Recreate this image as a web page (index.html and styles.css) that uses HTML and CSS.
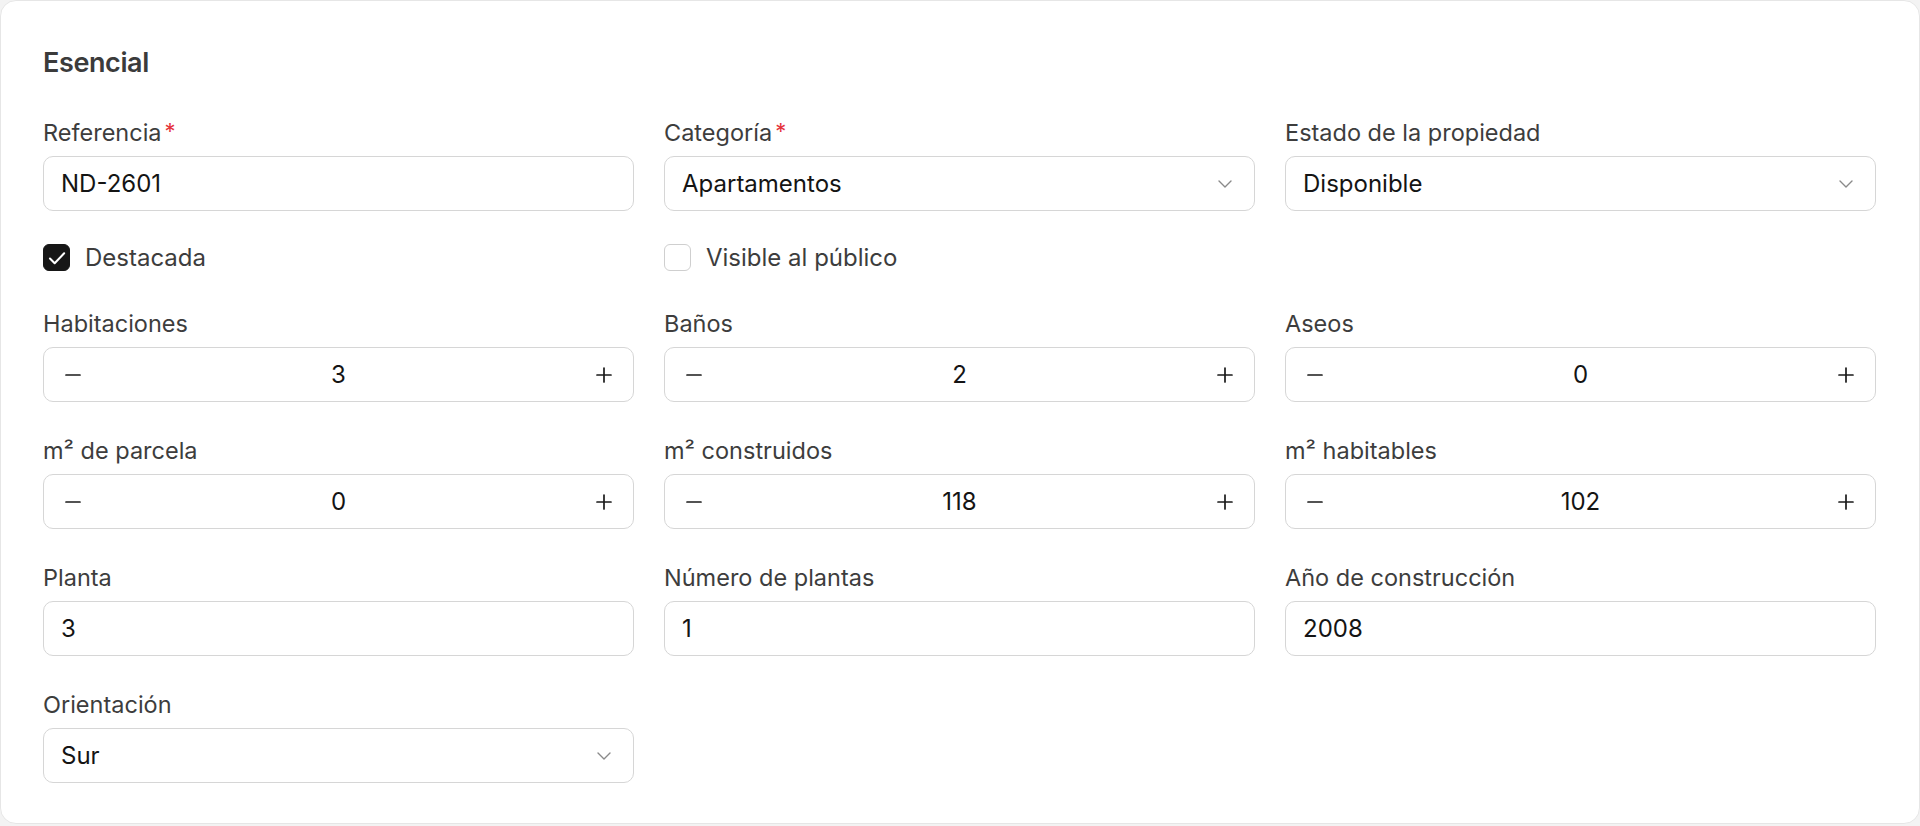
FILE: index.html
```html
<!DOCTYPE html>
<html lang="es">
<head>
<meta charset="utf-8">
<title>Esencial</title>
<link rel="stylesheet" href="styles.css">
</head>
<body>
<section class="card">
  <h2 class="title">Esencial</h2>
  <div class="grid">
    <div class="field">
      <label class="label">Referencia<span class="req">*</span></label>
      <div class="control"><span class="value">ND-2601</span></div>
    </div>
    <div class="field">
      <label class="label">Categoría<span class="req">*</span></label>
      <div class="control select"><span class="value">Apartamentos</span>
        <svg class="chev" viewBox="0 0 14 8" width="14" height="8"><path d="M1 1l6 6 6-6" fill="none" stroke="#8a8a8a" stroke-width="1.4" stroke-linecap="round" stroke-linejoin="round"/></svg>
      </div>
    </div>
    <div class="field">
      <label class="label">Estado de la propiedad</label>
      <div class="control select"><span class="value">Disponible</span>
        <svg class="chev" viewBox="0 0 14 8" width="14" height="8"><path d="M1 1l6 6 6-6" fill="none" stroke="#8a8a8a" stroke-width="1.4" stroke-linecap="round" stroke-linejoin="round"/></svg>
      </div>
    </div>

    <div class="check-row">
      <span class="box checked"><svg viewBox="0 0 16 16" width="22" height="22"><path d="M2.9 8.4l3.4 3.4 6.9-7.2" fill="none" stroke="#fff" stroke-width="1.5" stroke-linecap="round" stroke-linejoin="round"/></svg></span>
      <span class="check-label">Destacada</span>
    </div>
    <div class="check-row">
      <span class="box"></span>
      <span class="check-label">Visible al público</span>
    </div>
    <div></div>

    <div class="field">
      <label class="label">Habitaciones</label>
      <div class="control stepper">
        <svg class="ico" viewBox="0 0 16 16" width="16" height="16"><path d="M1 8h14" stroke="#1a1a1a" stroke-width="1.7" stroke-linecap="round"/></svg>
        <span class="num">3</span>
        <svg class="ico" viewBox="0 0 16 16" width="16" height="16"><path d="M1 8h14M8 1v14" stroke="#1a1a1a" stroke-width="1.7" stroke-linecap="round"/></svg>
      </div>
    </div>
    <div class="field">
      <label class="label">Baños</label>
      <div class="control stepper">
        <svg class="ico" viewBox="0 0 16 16" width="16" height="16"><path d="M1 8h14" stroke="#1a1a1a" stroke-width="1.7" stroke-linecap="round"/></svg>
        <span class="num">2</span>
        <svg class="ico" viewBox="0 0 16 16" width="16" height="16"><path d="M1 8h14M8 1v14" stroke="#1a1a1a" stroke-width="1.7" stroke-linecap="round"/></svg>
      </div>
    </div>
    <div class="field">
      <label class="label">Aseos</label>
      <div class="control stepper">
        <svg class="ico" viewBox="0 0 16 16" width="16" height="16"><path d="M1 8h14" stroke="#1a1a1a" stroke-width="1.7" stroke-linecap="round"/></svg>
        <span class="num">0</span>
        <svg class="ico" viewBox="0 0 16 16" width="16" height="16"><path d="M1 8h14M8 1v14" stroke="#1a1a1a" stroke-width="1.7" stroke-linecap="round"/></svg>
      </div>
    </div>

    <div class="field">
      <label class="label">m² de parcela</label>
      <div class="control stepper">
        <svg class="ico" viewBox="0 0 16 16" width="16" height="16"><path d="M1 8h14" stroke="#1a1a1a" stroke-width="1.7" stroke-linecap="round"/></svg>
        <span class="num">0</span>
        <svg class="ico" viewBox="0 0 16 16" width="16" height="16"><path d="M1 8h14M8 1v14" stroke="#1a1a1a" stroke-width="1.7" stroke-linecap="round"/></svg>
      </div>
    </div>
    <div class="field">
      <label class="label">m² construidos</label>
      <div class="control stepper">
        <svg class="ico" viewBox="0 0 16 16" width="16" height="16"><path d="M1 8h14" stroke="#1a1a1a" stroke-width="1.7" stroke-linecap="round"/></svg>
        <span class="num">118</span>
        <svg class="ico" viewBox="0 0 16 16" width="16" height="16"><path d="M1 8h14M8 1v14" stroke="#1a1a1a" stroke-width="1.7" stroke-linecap="round"/></svg>
      </div>
    </div>
    <div class="field">
      <label class="label">m² habitables</label>
      <div class="control stepper">
        <svg class="ico" viewBox="0 0 16 16" width="16" height="16"><path d="M1 8h14" stroke="#1a1a1a" stroke-width="1.7" stroke-linecap="round"/></svg>
        <span class="num">102</span>
        <svg class="ico" viewBox="0 0 16 16" width="16" height="16"><path d="M1 8h14M8 1v14" stroke="#1a1a1a" stroke-width="1.7" stroke-linecap="round"/></svg>
      </div>
    </div>

    <div class="field">
      <label class="label">Planta</label>
      <div class="control"><span class="value">3</span></div>
    </div>
    <div class="field">
      <label class="label">Número de plantas</label>
      <div class="control"><span class="value">1</span></div>
    </div>
    <div class="field">
      <label class="label">Año de construcción</label>
      <div class="control"><span class="value">2008</span></div>
    </div>

    <div class="field">
      <label class="label">Orientación</label>
      <div class="control select"><span class="value">Sur</span>
        <svg class="chev" viewBox="0 0 14 8" width="14" height="8"><path d="M1 1l6 6 6-6" fill="none" stroke="#8a8a8a" stroke-width="1.4" stroke-linecap="round" stroke-linejoin="round"/></svg>
      </div>
    </div>
  </div>
</section>
</body>
</html>
```
FILE: styles.css
```css
* { box-sizing: border-box; }
html, body { margin: 0; padding: 0; }
body {
  background: #f3f3f3;
  font-family: Inter, "Noto Sans", "Liberation Sans", sans-serif;
  color: #1a1a1a;
}
.card {
  height: 824px;
  background: #fff;
  border: 1px solid #e6e6e6;
  border-radius: 16px;
  padding: 46px 43px 0 42px;
}
.title {
  margin: 0 0 40px 0;
  font-size: 27px;
  line-height: 32px;
  font-weight: 600;
  color: #3b3b3b;
  letter-spacing: -0.4px;
}
.grid {
  display: grid;
  grid-template-columns: repeat(3, 1fr);
  column-gap: 30px;
  row-gap: 35px;
}
.field {
  display: flex;
  flex-direction: column;
  gap: 9px;
}
.label {
  display: block;
  height: 28px;
  font-size: 23.5px;
  line-height: 28px;
  color: #3d3d3d;
}
.req {
  color: #e5333b;
  margin-left: 3px;
  font-size: 22px;
  line-height: 0;
  vertical-align: 2px;
}
.control {
  height: 55px;
  border: 1.5px solid #d6d6d6;
  border-radius: 10px;
  background: #fff;
  display: flex;
  align-items: center;
  padding: 0 17px;
  font-size: 24px;
  color: #141414;
}
.select { justify-content: space-between; padding-right: 22px; }
.chev { display: block; }
.stepper {
  justify-content: space-between;
  padding: 0 21px;
}
.ico { display: block; }
.num { flex: 1; text-align: center; }
.check-row {
  display: flex;
  align-items: center;
  gap: 15px;
  height: 27px;
  margin-top: -2px;
  margin-bottom: 4px;
}
.box {
  width: 27px;
  height: 27px;
  border-radius: 6px;
  border: 1.5px solid #cfcfcf;
  background: #fff;
  display: flex;
  align-items: center;
  justify-content: center;
}
.box.checked { background: #161616; border-color: #161616; }
.check-label {
  font-size: 24px;
  color: #3d3d3d;
}
```
